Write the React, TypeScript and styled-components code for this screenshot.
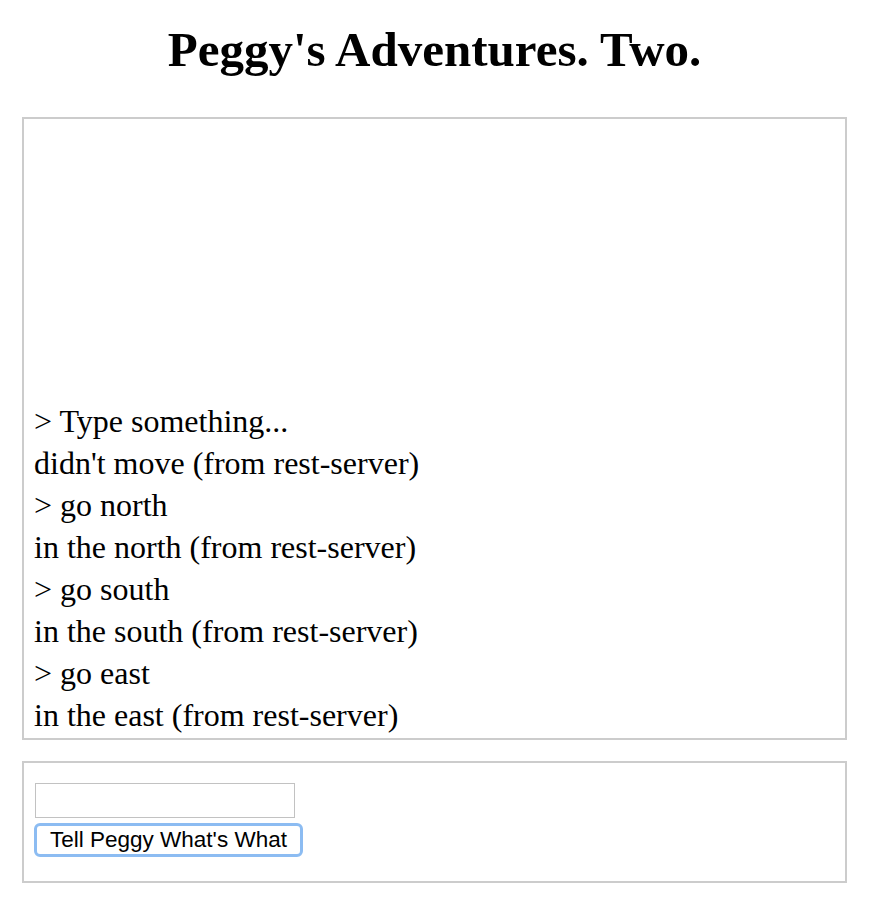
import styled, { createGlobalStyle } from "styled-components";

const GlobalStyle = createGlobalStyle`
  html, body {
    margin: 0;
    padding: 0;
    background: #fff;
    color: #000;
    font-family: "Liberation Serif", "Times New Roman", serif;
  }
`;

const Page = styled.div`
  width: 870px;
  padding: 0 23px 0 22px;
  box-sizing: border-box;
`;

const Title = styled.h1`
  margin: 0;
  padding: 21px 0 39px;
  text-align: center;
  font-size: 49px;
  line-height: 57px;
  font-weight: bold;
`;

const Panel = styled.div`
  border: 2px solid #cccccc;
  box-sizing: border-box;
`;

const Log = styled(Panel)`
  height: 623px;
  padding: 0 10px 2px;
  display: flex;
  flex-direction: column;
  justify-content: flex-end;
  overflow: hidden;
`;

const Line = styled.div`
  font-size: 32px;
  line-height: 42px;
  white-space: nowrap;
`;

const Controls = styled(Panel)`
  margin-top: 21px;
  height: 122px;
  padding: 20px 10px;
  display: flex;
  flex-direction: column;
  align-items: flex-start;
  gap: 5px;
`;

const Input = styled.input`
  width: 260px;
  height: 35px;
  margin: 0 0 0 1px;
  box-sizing: border-box;
  border: 1px solid #c2c2c2;
  padding: 2px 4px;
  font-size: 18px;
  outline: none;
`;

const Button = styled.button`
  height: 34px;
  width: 269px;
  padding: 0;
  box-sizing: border-box;
  background: #fff;
  border: 3px solid #8cbcf2;
  border-radius: 6px;
  font-family: "Liberation Sans", Arial, sans-serif;
  font-size: 22.5px;
  line-height: 28px;
  color: #000;
  cursor: pointer;
`;

const lines = [
  "> Type something...",
  "didn't move (from rest-server)",
  "> go north",
  "in the north (from rest-server)",
  "> go south",
  "in the south (from rest-server)",
  "> go east",
  "in the east (from rest-server)",
];

export default function App() {
  return (
    <Page>
      <GlobalStyle />
      <Title>Peggy's Adventures. Two.</Title>
      <Log>
        {lines.map((l, i) => (
          <Line key={i}>{l}</Line>
        ))}
      </Log>
      <Controls>
        <Input type="text" />
        <Button>Tell Peggy What's What</Button>
      </Controls>
    </Page>
  );
}
